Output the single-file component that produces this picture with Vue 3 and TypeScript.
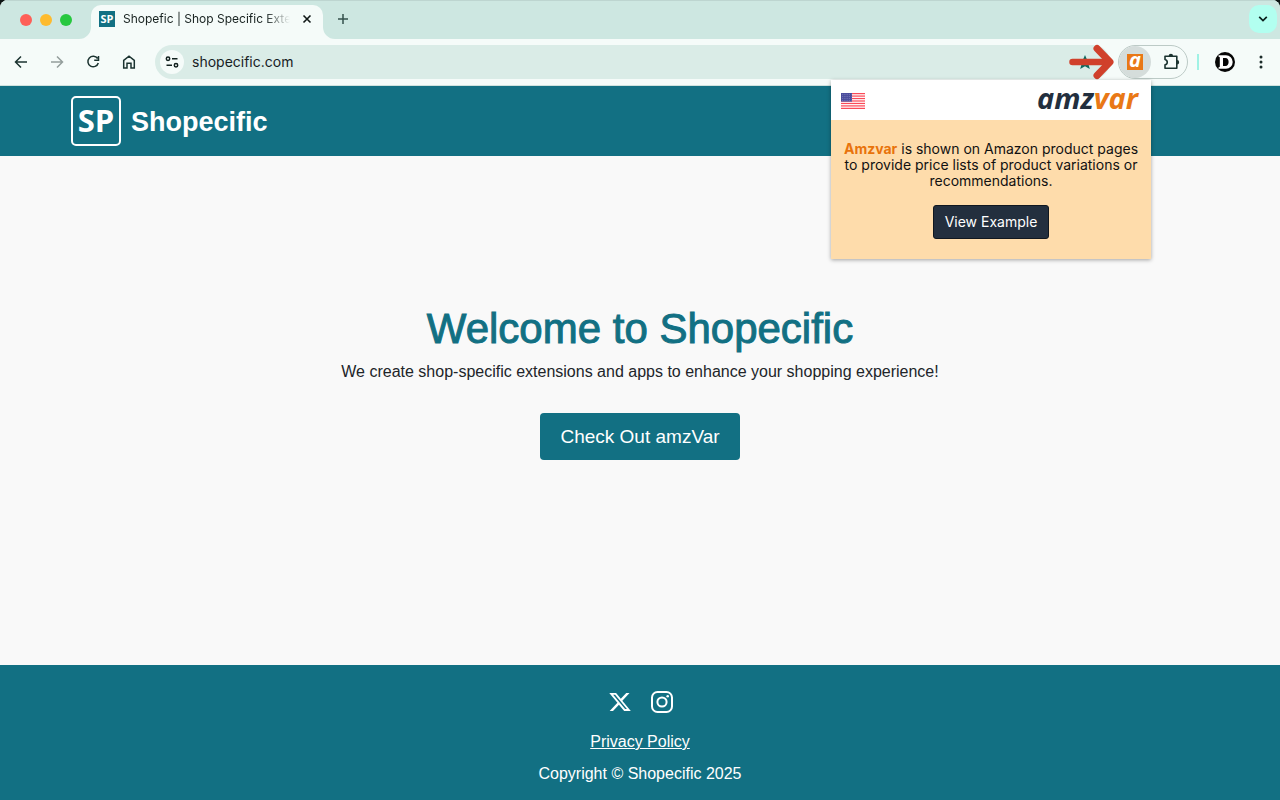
<script setup lang="ts">
interface Light { name: string; color: string }

const lights: Light[] = [
  { name: 'Close window', color: '#fe5f57' },
  { name: 'Minimize window', color: '#febb2e' },
  { name: 'Zoom window', color: '#27c83f' },
]
const stripes: number[] = [0, 1, 2, 3, 4, 5, 6]
const stars: number[] = [0, 1, 2, 3]
</script>

<template>
  <div class="window">
    <header class="tabstrip">
      <div class="lights">
        <button v-for="l in lights" :key="l.name" class="light" :aria-label="l.name" :style="{ background: l.color }"></button>
      </div>
      <div class="tab">
        <svg class="curve left" width="12" height="12" viewBox="0 0 12 12"><path d="M12 0v12H0A12 12 0 0 0 12 0z" fill="#f5fbf9" /></svg>
        <span class="favicon">SP</span>
        <span class="tab-title">Shopefic | Shop Specific Extensions</span>
        <button class="bare tab-close" aria-label="Close tab">
          <svg width="10" height="10" viewBox="0 0 10 10"><path d="M1.500 1.500l7 7M8.500 1.500l-7 7" stroke="#101817" stroke-width="1.600" /></svg>
        </button>
        <svg class="curve right" width="12" height="12" viewBox="0 0 12 12"><path d="M0 0v12h12A12 12 0 0 1 0 0z" fill="#f5fbf9" /></svg>
      </div>
      <button class="bare new-tab" aria-label="New tab">
        <svg width="12" height="12" viewBox="0 0 12 12"><path d="M6 1v10M1 6h10" stroke="#35514c" stroke-width="1.500" /></svg>
      </button>
      <button class="tab-search" aria-label="Search tabs">
        <svg width="10" height="8" viewBox="0 0 10 8"><path d="M1.200 1.800L5 5.600l3.800-3.800" fill="none" stroke="#0b1f1c" stroke-width="1.700" /></svg>
      </button>
    </header>

    <div class="toolbar">
      <nav class="nav" aria-label="Browser">
        <button class="bare" aria-label="Back">
          <svg width="16" height="16" viewBox="0 0 16 16"><path d="M14 8H3M8 2.500L2.500 8 8 13.500" fill="none" stroke="#1b3330" stroke-width="1.500" /></svg>
        </button>
        <button class="bare" aria-label="Forward">
          <svg width="16" height="16" viewBox="0 0 16 16"><path d="M2 8h11M8 2.500L13.500 8 8 13.500" fill="none" stroke="#949e9c" stroke-width="1.500" /></svg>
        </button>
        <button class="bare" aria-label="Reload">
          <svg width="16" height="16" viewBox="0 0 16 16"><path d="M12.600 4.500A5.300 5.300 0 1 0 13.300 9M13.500 2v4.300H9.200" fill="none" stroke="#1b3330" stroke-width="1.500" /></svg>
        </button>
        <button class="bare" aria-label="Home">
          <svg width="16" height="16" viewBox="0 0 16 16"><path d="M2.700 6.300L8 2.200l5.300 4.100v7.800H10V9.300H6v4.800H2.700z" fill="none" stroke="#1b3330" stroke-width="1.500" /></svg>
        </button>
      </nav>

      <div class="omnibox">
        <button class="site-info" aria-label="Site information">
          <svg width="14" height="14" viewBox="0 0 14 14" fill="none" stroke="#12211f" stroke-width="1.500"><circle cx="3" cy="3.800" r="1.700" /><path d="M7 3.800H12.500M1.500 10.200H7" /><circle cx="11" cy="10.200" r="1.700" /></svg>
        </button>
        <input class="url" type="text" value="shopecific.com" aria-label="Address" />
        <button class="bare star" aria-label="Edit bookmark">
          <svg width="16" height="16" viewBox="0 0 14 14"><path d="M7 .8l1.700 4.100 4.500.4-3.400 2.900 1.400 5L7 10.800l-4.200 2.400 1.400-5L.8 5.300l4.500-.4z" fill="#0d6b60" /></svg>
        </button>
        <svg class="arrow" width="46" height="36" viewBox="0 0 46 36" fill="none" stroke="#d0402b" stroke-linecap="round" stroke-linejoin="round"><path d="M3.500 18h36" stroke-width="6.500" /><path d="M28 4.500l13 13.500-13 13.500" stroke-width="7" /></svg>
      </div>

      <div class="ext">
        <button class="ext-active" aria-label="amzvar"><span class="ext-logo">a</span></button>
        <button class="bare puzzle" aria-label="Extensions">
          <svg width="20" height="20" viewBox="0 0 20 20"><path d="M4 4.200h11.800v12H4v-3.300c3-.6 3-4.800 0-5.400z" fill="none" stroke="#1b3330" stroke-width="1.600" stroke-linejoin="round" /><path d="M7.700 4a2.200 2.200 0 0 1 4.400 0zM16 8a2.200 2.200 0 0 1 0 4.400z" fill="#1b3330" /></svg>
        </button>
      </div>
      <span class="divider"></span>
      <button class="bare profile" aria-label="Profile">
        <svg width="20" height="20" viewBox="0 0 20 20"><circle cx="10" cy="10" r="10" fill="#060606" /><path fill-rule="evenodd" d="M3.500 3.300h7.500a6.700 6.700 0 0 1 0 13.400H3.500v-1.200l1.300-.8V5.300l-1.300-.8zM8 6v8h2.500c4.200 0 4.200-8 0-8z" fill="#fff" /></svg>
      </button>
      <button class="bare menu" aria-label="Menu">
        <svg width="4" height="16" viewBox="0 0 4 16" fill="#1b2b29"><circle cx="2" cy="3" r="1.500" /><circle cx="2" cy="8" r="1.500" /><circle cx="2" cy="13" r="1.500" /></svg>
      </button>

      <section class="popup" aria-label="amzvar extension">
        <div class="popup-head">
          <svg width="24" height="16" viewBox="0 0 24 16">
            <rect width="24" height="16" fill="#fff" />
            <rect v-for="s in stripes" :key="s" width="24" height="1.230" :y="s * 2.46" fill="#fb4a58" />
            <rect width="11" height="8.600" fill="#4a4c9c" />
            <path v-for="r in stars" :key="'r' + r" :d="`M1 ${1.4 + r * 2}h9.500`" stroke="#9294c8" stroke-width=".7" stroke-dasharray=".8 1" />
          </svg>
          <span class="logo">amz<span class="orange">var</span></span>
        </div>
        <div class="popup-body">
          <p><strong>Amzvar</strong> is shown on Amazon product pages to provide price lists of product variations or recommendations.</p>
          <button class="example">View Example</button>
        </div>
      </section>
    </div>

    <header class="site-head">
      <span class="badge">SP</span>
      <span class="brand">Shopecific</span>
    </header>

    <main class="hero">
      <h1>Welcome to Shopecific</h1>
      <p>We create shop-specific extensions and apps to enhance your shopping experience!</p>
      <a class="cta" href="#amzvar">Check Out amzVar</a>
    </main>

    <footer class="foot">
      <div class="social">
        <a href="#x" aria-label="X">
          <svg width="24" height="22" viewBox="0 0 24 24" preserveAspectRatio="none"><path d="M18.244 2.250h3.308l-7.227 8.260 8.502 11.240H16.170l-5.214-6.817L4.990 21.750H1.680l7.730-8.835L1.254 2.250H8.080l4.713 6.231zm-1.161 17.520h1.833L7.084 4.126H5.117z" fill="#fff" /></svg>
        </a>
        <a href="#instagram" aria-label="Instagram">
          <svg width="22" height="22" viewBox="0 0 22 22" fill="none" stroke="#fff" stroke-width="2"><rect x="1" y="1" width="20" height="20" rx="5.500" /><circle cx="11" cy="11" r="4.600" /><circle cx="16.700" cy="5.300" r="1.300" fill="#fff" stroke="none" /></svg>
        </a>
      </div>
      <a class="policy" href="#privacy">Privacy Policy</a>
      <span>Copyright © Shopecific 2025</span>
    </footer>
  </div>
</template>

<style>
body {
  margin: 0;
  background: #0d1514;
}
</style>

<style scoped>
* {
  box-sizing: border-box;
}
.window {
  display: flex;
  flex-direction: column;
  min-height: 100vh;
  overflow: hidden;
  border-radius: 8px 8px 0 0;
  background: #f9f9f9;
  font-family: "Liberation Sans", Arial, sans-serif;
}
button {
  padding: 0;
  border: 0;
  font-family: inherit;
}
svg {
  display: block;
}
.bare {
  display: flex;
  align-items: center;
  justify-content: center;
  background: none;
}
.tabstrip {
  display: flex;
  align-items: flex-end;
  height: 39px;
  padding: 0 3px 0 20px;
  background: #cde7e1;
  border-top: 1px solid #bdd5d0;
}
.lights {
  display: flex;
  align-self: center;
  gap: 8px;
}
.light {
  width: 12px;
  height: 12px;
  border-radius: 50%;
}
.tab {
  position: relative;
  display: flex;
  align-items: center;
  width: 232px;
  height: 34px;
  margin-left: 19px;
  padding: 0 11px 6px 8px;
  border-radius: 10px 10px 0 0;
  background: #f5fbf9;
}
.curve {
  position: absolute;
  bottom: 0;
}
.left {
  left: -12px;
}
.right {
  right: -12px;
}
.favicon {
  width: 16px;
  height: 16px;
  background: #127083;
  color: #fff;
  font: bold 11px/15px "Open Sans", sans-serif;
  text-align: center;
}
.tab-title {
  flex: 1;
  overflow: hidden;
  margin: 0 12px 0 8px;
  color: #17211f;
  font: 12px/16px Inter, sans-serif;
  white-space: nowrap;
  mask-image: linear-gradient(to right, #000 85%, transparent);
}
.new-tab {
  width: 16px;
  height: 16px;
  margin: 0 auto 12px 12px;
}
.tab-search {
  display: flex;
  align-items: center;
  justify-content: center;
  width: 28px;
  height: 28px;
  margin-bottom: 6px;
  border-radius: 10px;
  background: #b2fff0;
}
.toolbar {
  position: relative;
  z-index: 1;
  display: flex;
  align-items: center;
  height: 47px;
  padding: 0 11px 1px 13px;
  background: #f5fbf9;
  border-bottom: 1px solid #cfe2de;
}
.nav {
  display: flex;
  gap: 20px;
}
.omnibox {
  position: relative;
  display: flex;
  flex: 1;
  align-items: center;
  height: 34px;
  margin: 0 8px 0 18px;
  padding: 0 17px 0 5px;
  border-radius: 17px;
  background: #daece7;
}
.site-info {
  display: flex;
  align-items: center;
  justify-content: center;
  width: 24px;
  height: 24px;
  border-radius: 50%;
  background: #f5fbf9;
}
.url {
  flex: 1;
  min-width: 0;
  margin-left: 8px;
  padding: 0;
  border: 0;
  background: none;
  color: #17211f;
  font: 14px/20px Inter, sans-serif;
}
.arrow {
  position: absolute;
  right: -5px;
  top: -1px;
}
.ext {
  display: flex;
  width: 70px;
  height: 34px;
  border: 1px solid #bccac6;
  border-radius: 17px;
}
.ext-active {
  display: flex;
  align-items: center;
  justify-content: center;
  width: 32px;
  border-radius: 50%;
  background: #d5dddb;
}
.ext-logo {
  width: 16px;
  height: 16px;
  background: #e97816;
  color: #fff;
  font: italic bold 20px/12px "Open Sans", sans-serif;
}
.puzzle {
  flex: 1;
  padding-left: 4px;
}
.divider {
  width: 2px;
  height: 16px;
  margin: 0 16px 0 9px;
  background: #a0f2e5;
}
.menu {
  width: 16px;
  margin-left: 18px;
}
.popup {
  position: absolute;
  top: 41px;
  right: 129px;
  width: 320px;
  background: #fedcab;
  box-shadow: 0 1px 4px rgba(0, 0, 0, 0.35);
}
.popup-head {
  display: flex;
  align-items: center;
  justify-content: space-between;
  height: 40px;
  padding: 2px 13px 0 10px;
  background: #fff;
}
.logo {
  padding-bottom: 6px;
  color: #232f3e;
  font: italic bold 29px/34px "Open Sans", sans-serif;
}
.orange {
  color: #e97816;
}
.popup-body {
  display: flex;
  flex-direction: column;
  align-items: center;
  padding: 21px 12px 20px;
}
.popup-body p {
  margin: 0 0 16px;
  color: #111;
  font: 14px/16px Inter, sans-serif;
  text-align: center;
}
.popup-body strong {
  color: #e8730b;
}
.example {
  height: 34px;
  padding: 0 11px;
  border: 1px solid #10171f;
  border-radius: 3px;
  background: #232f3e;
  color: #fff;
  font: 14px/20px Inter, sans-serif;
}
.site-head {
  display: flex;
  align-items: center;
  gap: 10px;
  height: 70px;
  padding: 0 71px;
  background: #127083;
  color: #fff;
}
.badge {
  width: 50px;
  height: 50px;
  border: 2px solid #fff;
  border-radius: 5px;
  font: bold 31px/45px "Open Sans", sans-serif;
  text-align: center;
}
.brand {
  padding-top: 2px;
  font-size: 27px;
  font-weight: bold;
}
.hero {
  display: flex;
  flex: 1;
  flex-direction: column;
  align-items: center;
  justify-content: center;
  padding-bottom: 58px;
}
.hero h1 {
  margin: 0 0 7px;
  padding-top: 1px;
  color: #127083;
  font-size: 42px;
  font-weight: 400;
  line-height: 48px;
  -webkit-text-stroke: 1px #127083;
}
.hero p {
  margin: 0 0 29px;
  color: #212529;
  font-size: 16px;
  line-height: 24px;
}
.cta {
  padding: 12px 20px;
  border-radius: 4px;
  background: #127083;
  color: #fff;
  font-size: 19px;
  line-height: 23px;
  text-decoration: none;
}
.foot {
  display: flex;
  flex-direction: column;
  align-items: center;
  gap: 8px;
  padding: 26px 16px 14px;
  background: #127083;
  color: #fff;
  font-size: 16px;
  line-height: 24px;
}
.social {
  display: flex;
  gap: 19px;
  margin-bottom: 9px;
}
.policy {
  color: inherit;
}
</style>
